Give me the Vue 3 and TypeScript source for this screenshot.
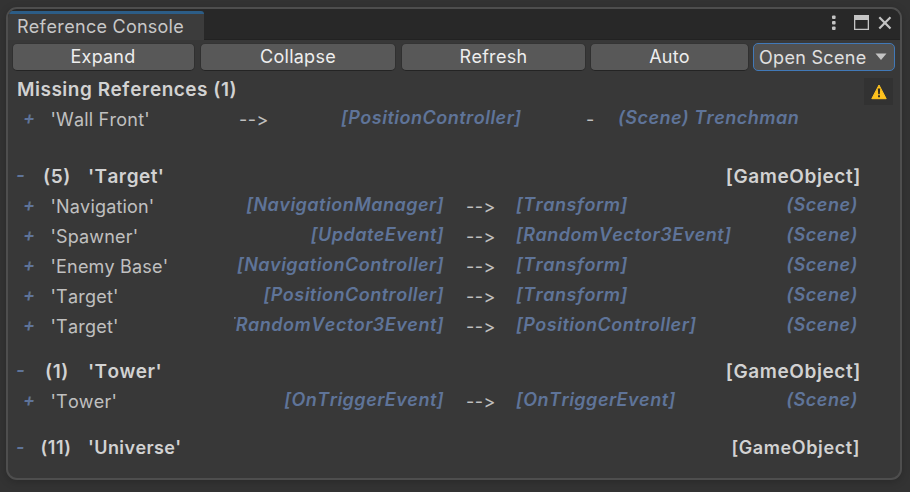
<script setup lang="ts">
interface RefRow {
  name: string
  from: string
  to: string
  scene: string
}
interface Group {
  count: number
  name: string
  kind: string
  size: 'large' | 'small'
  rows: RefRow[]
}

const buttons: string[] = ['Expand', 'Collapse', 'Refresh', 'Auto']

const groups: Group[] = [
  {
    count: 5,
    name: "'Target'",
    kind: '[GameObject]',
    size: 'large',
    rows: [
      { name: "'Navigation'", from: '[NavigationManager]', to: '[Transform]', scene: '(Scene)' },
      { name: "'Spawner'", from: '[UpdateEvent]', to: '[RandomVector3Event]', scene: '(Scene)' },
      { name: "'Enemy Base'", from: '[NavigationController]', to: '[Transform]', scene: '(Scene)' },
      { name: "'Target'", from: '[PositionController]', to: '[Transform]', scene: '(Scene)' },
      { name: "'Target'", from: '[RandomVector3Event]', to: '[PositionController]', scene: '(Scene)' },
    ],
  },
  {
    count: 1,
    name: "'Tower'",
    kind: '[GameObject]',
    size: 'large',
    rows: [{ name: "'Tower'", from: '[OnTriggerEvent]', to: '[OnTriggerEvent]', scene: '(Scene)' }],
  },
  { count: 11, name: "'Universe'", kind: '[GameObject]', size: 'small', rows: [] },
]
</script>

<template>
  <div class="desktop">
    <section class="window">
      <header class="titlebar">
        <div class="tab">Reference Console</div>
        <div class="controls">
          <svg class="dots" width="6" height="16" viewBox="0 0 6 16">
            <rect x="1" y="0.5" width="3.6" height="3.6" rx="1" />
            <rect x="1" y="6" width="3.6" height="3.6" rx="1" />
            <rect x="1" y="11.5" width="3.6" height="3.6" rx="1" />
          </svg>
          <svg class="maximize" width="15" height="15" viewBox="0 0 15 15">
            <path fill-rule="evenodd" d="M0 0H15V15H0ZM1.3 5V13.7H13.7V5Z" />
          </svg>
          <svg class="close" width="14" height="14" viewBox="0 0 14 14">
            <path d="M1.3 1.3 12.5 12.5M12.5 1.3 1.3 12.5" />
          </svg>
        </div>
      </header>

      <nav class="toolbar">
        <button v-for="label in buttons" :key="label" class="btn">{{ label }}</button>
        <button class="btn dropdown">
          <span>Open Scene</span>
          <svg width="12" height="8" viewBox="0 0 12 8"><path d="M0.5 0.5H11.5L6 7Z" /></svg>
        </button>
      </nav>

      <main class="content">
        <div class="missing-head">
          <h2>Missing References (1)</h2>
          <div class="warn">
            <svg width="16" height="16" viewBox="0 0 16 16">
              <path class="tri" d="M8 1 15.2 14.7H0.8Z" />
              <path class="mark" d="M6.8 4.4H9.2L8.8 10.2H7.2ZM7 11.2H9V13.2H7Z" />
            </svg>
          </div>
        </div>
        <div class="row missing">
          <span class="toggle">+</span>
          <span class="name">'Wall Front'</span>
          <span class="arrow">--&gt;</span>
          <span class="ref">[PositionController]</span>
          <span class="dash">-</span>
          <span class="ref">(Scene) Trenchman</span>
        </div>

        <section v-for="g in groups" :key="g.name" class="group" :class="g.size">
          <div class="group-head">
            <span class="toggle">-</span>
            <span class="count">({{ g.count }})</span>
            <span class="title">{{ g.name }}</span>
            <span class="kind">{{ g.kind }}</span>
          </div>
          <div v-for="(r, i) in g.rows" :key="i" class="row link">
            <span class="toggle">+</span>
            <span class="name">{{ r.name }}</span>
            <span class="from"><span class="ref">{{ r.from }}</span></span>
            <span class="arrow">--&gt;</span>
            <span class="ref">{{ r.to }}</span>
            <span class="ref scene">{{ r.scene }}</span>
          </div>
        </section>
      </main>
    </section>
  </div>
</template>

<style>
body {
  background: #333333;
}
</style>

<style scoped>
* {
  box-sizing: border-box;
}
.desktop {
  width: 910px;
  height: 492px;
  padding: 7px 8px 12px 6px;
  background: #333333;
  font-family: Inter, 'Liberation Sans', sans-serif;
  font-size: 18px;
  font-kerning: none;
  color: #c0c0c0;
  overflow: hidden;
}
.window {
  height: 473px;
  border: 2px solid #4e4e4e;
  border-radius: 11px;
  background: #383838;
  overflow: hidden;
  box-shadow: 0 2px 8px rgba(0, 0, 0, 0.2);
}
.titlebar {
  height: 31px;
  display: flex;
  justify-content: space-between;
  background: #282828;
  border-bottom: 1px solid #222222;
}
.tab {
  width: 196px;
  height: 29px;
  margin-top: 2px;
  padding-left: 9px;
  border-top: 3px solid #2c5d87;
  border-top-right-radius: 3px;
  background: #3c3c3c;
  color: #c8c8c8;
  line-height: 26px;
  letter-spacing: 0.25px;
  white-space: nowrap;
}
.controls {
  display: flex;
  align-items: center;
  padding: 0 8px 3px 0;
  fill: #c4c4c4;
}
.dots {
  margin-right: 17px;
}
.maximize {
  margin-right: 9px;
}
.close {
  fill: none;
  stroke: #c4c4c4;
  stroke-width: 2.2;
}
.toolbar {
  display: grid;
  grid-template-columns: 183px 196px 184px 159px 142px;
  column-gap: 5px;
  height: 31px;
  padding: 3px 0 0 4px;
}
.btn {
  height: 28px;
  padding: 0 0 1px;
  border: 1px solid #303030;
  border-top-color: #343434;
  border-bottom-color: #242424;
  border-radius: 5px;
  background: #585858;
  color: #eeeeee;
  font: inherit;
  font-kerning: none;
  line-height: 25px;
  letter-spacing: 0.25px;
}
.btn:nth-child(1) {
  padding-right: 1px;
}
.btn:nth-child(3) {
  margin-right: -1px;
}
.dropdown {
  display: flex;
  align-items: center;
  justify-content: space-between;
  margin-left: -1px;
  margin-right: 1px;
  padding: 0 7px 0 5px;
  border: 1px solid #4179b8;
  background: #515151;
  color: #e0e0e0;
  letter-spacing: 0.3px;
}
.dropdown svg {
  fill: #c4c4c4;
}
.missing-head {
  display: flex;
  justify-content: space-between;
  height: 34px;
  padding: 0 7px 0 9px;
}
h2 {
  margin: 4px 0 0;
  font-size: 19px;
  font-weight: 600;
  line-height: 30px;
  letter-spacing: 0.5px;
  color: #d2d2d2;
}
.warn {
  display: grid;
  place-items: center;
  width: 29px;
  height: 27px;
  margin-top: 7px;
  background: #323232;
}
.tri {
  fill: #ffc31e;
  stroke: #ffc31e;
  stroke-width: 1;
  stroke-linejoin: round;
}
.mark {
  fill: #383020;
}
.row {
  display: grid;
  align-items: center;
  height: 30px;
  padding-left: 15px;
  line-height: 30px;
  letter-spacing: 0.18px;
  white-space: nowrap;
}
.link {
  grid-template-columns: 27.5px 183.5px 210px 72px 240px 102px;
}
.missing {
  grid-template-columns: 27.5px 188.5px 102px 245px 32px 1fr;
}
.toggle {
  position: relative;
  top: -2px;
  font-weight: 600;
  font-style: italic;
  color: #5f7499;
}
.group-head .toggle {
  top: -1px;
}
.ref {
  position: relative;
  top: -2px;
  font-weight: 600;
  font-style: italic;
  letter-spacing: 0.5px;
  color: #5f7499;
}
.from {
  display: flex;
  justify-content: flex-end;
  overflow: hidden;
}
.arrow {
  padding-left: 22px;
  letter-spacing: 0.5px;
}
.missing .arrow {
  padding-left: 0;
}
.scene {
  text-align: right;
  letter-spacing: 0.6px;
}
.group-head {
  display: grid;
  grid-template-columns: 25px 32px 1fr auto;
  align-items: center;
  height: 30px;
  padding: 0 39px 0 8px;
  font-size: 19px;
  font-weight: 600;
  line-height: 30px;
  letter-spacing: 0.6px;
  color: #d2d2d2;
}
.count {
  text-align: center;
}
.title {
  padding-left: 15px;
  letter-spacing: 0.4px;
}
.group {
  margin-top: 15px;
}
.missing + .group {
  margin-top: 27px;
}
.group.small {
  margin-top: 16px;
}
.small .group-head {
  padding-right: 40px;
  font-size: 18px;
}
.small .count {
  margin-left: -2px;
}
</style>
